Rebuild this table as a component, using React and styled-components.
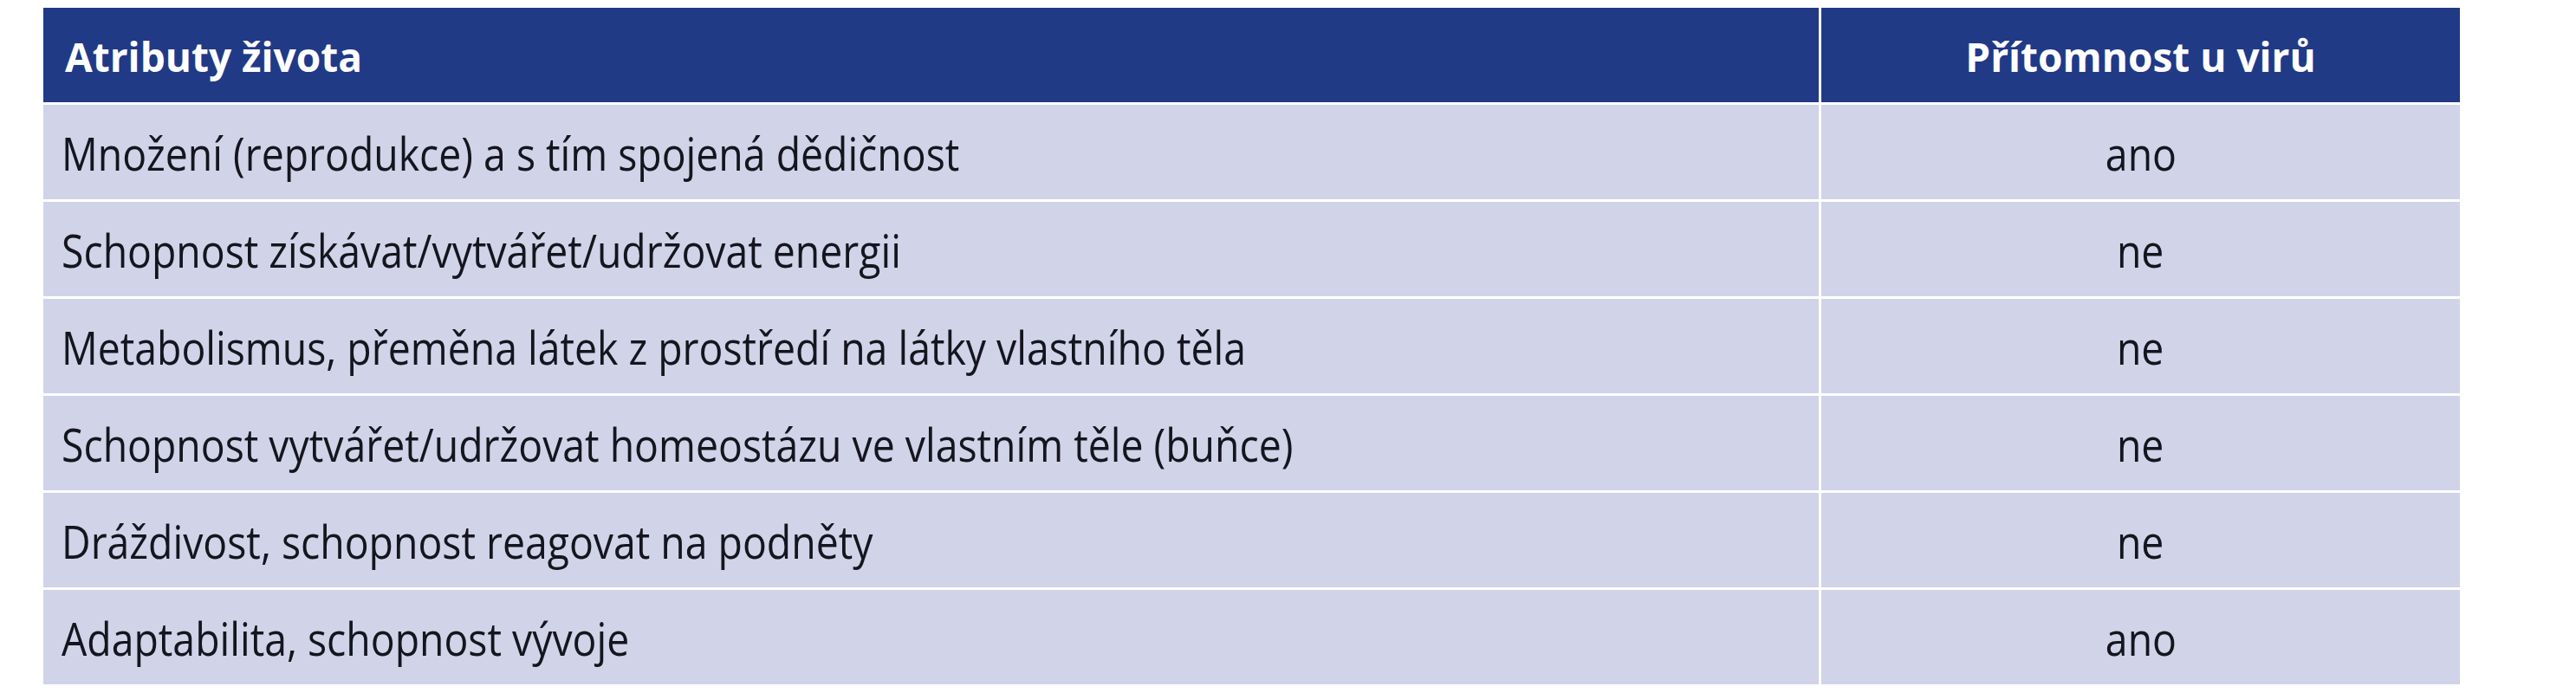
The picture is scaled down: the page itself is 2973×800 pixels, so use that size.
import React from "react";
import styled, { createGlobalStyle } from "styled-components";

const GlobalStyle = createGlobalStyle`
  html, body {
    margin: 0;
    padding: 0;
    background: #ffffff;
  }
  body {
    font-family: "Open Sans", "Noto Sans", "Liberation Sans", sans-serif;
  }
`;

const Page = styled.div`
  padding: 9px 0 0 50px;
`;

const Table = styled.div`
  display: grid;
  grid-template-columns: 2049px 737px;
  grid-auto-rows: 109px;
  gap: 3px;
  width: 2789px;
  background: #ffffff;
`;

const HeadCell = styled.div`
  display: flex;
  align-items: center;
  justify-content: ${(p) => (p.$center ? "center" : "flex-start")};
  padding: 3px ${(p) => (p.$center ? "0" : "25px")} 0;
  background: #213a86;
  color: #ffffff;
  font-family: "Open Sans", "Noto Sans", "Liberation Sans", sans-serif;
  font-weight: 700;
  font-size: 46px;
  white-space: nowrap;
`;

const BodyCell = styled.div`
  display: flex;
  align-items: center;
  justify-content: ${(p) => (p.$center ? "center" : "flex-start")};
  padding: 1px ${(p) => (p.$center ? "0" : "21px")} 0;
  background: #d1d3e8;
  color: #15151f;
  font-family: "Open Sans", "Noto Sans", "Liberation Sans", sans-serif;
  font-weight: 400;
  font-size: 53px;
  white-space: nowrap;
`;

const Squeezed = styled.span`
  display: inline-block;
  transform: scaleX(0.875);
  transform-origin: ${(p) => (p.$center ? "center" : "left")} center;
`;

const rows = [
  ["Množení (reprodukce) a s tím spojená dědičnost", "ano"],
  ["Schopnost získávat/vytvářet/udržovat energii", "ne"],
  ["Metabolismus, přeměna látek z prostředí na látky vlastního těla", "ne"],
  ["Schopnost vytvářet/udržovat homeostázu ve vlastním těle (buňce)", "ne"],
  ["Dráždivost, schopnost reagovat na podněty", "ne"],
  ["Adaptabilita, schopnost vývoje", "ano"],
];

export default function App() {
  return (
    <>
      <GlobalStyle />
      <Page>
        <Table>
          <HeadCell>Atributy života</HeadCell>
          <HeadCell $center>Přítomnost u virů</HeadCell>
          {rows.map(([attr, val]) => (
            <React.Fragment key={attr}>
              <BodyCell>
                <Squeezed>{attr}</Squeezed>
              </BodyCell>
              <BodyCell $center>
                <Squeezed $center>{val}</Squeezed>
              </BodyCell>
            </React.Fragment>
          ))}
        </Table>
      </Page>
    </>
  );
}
